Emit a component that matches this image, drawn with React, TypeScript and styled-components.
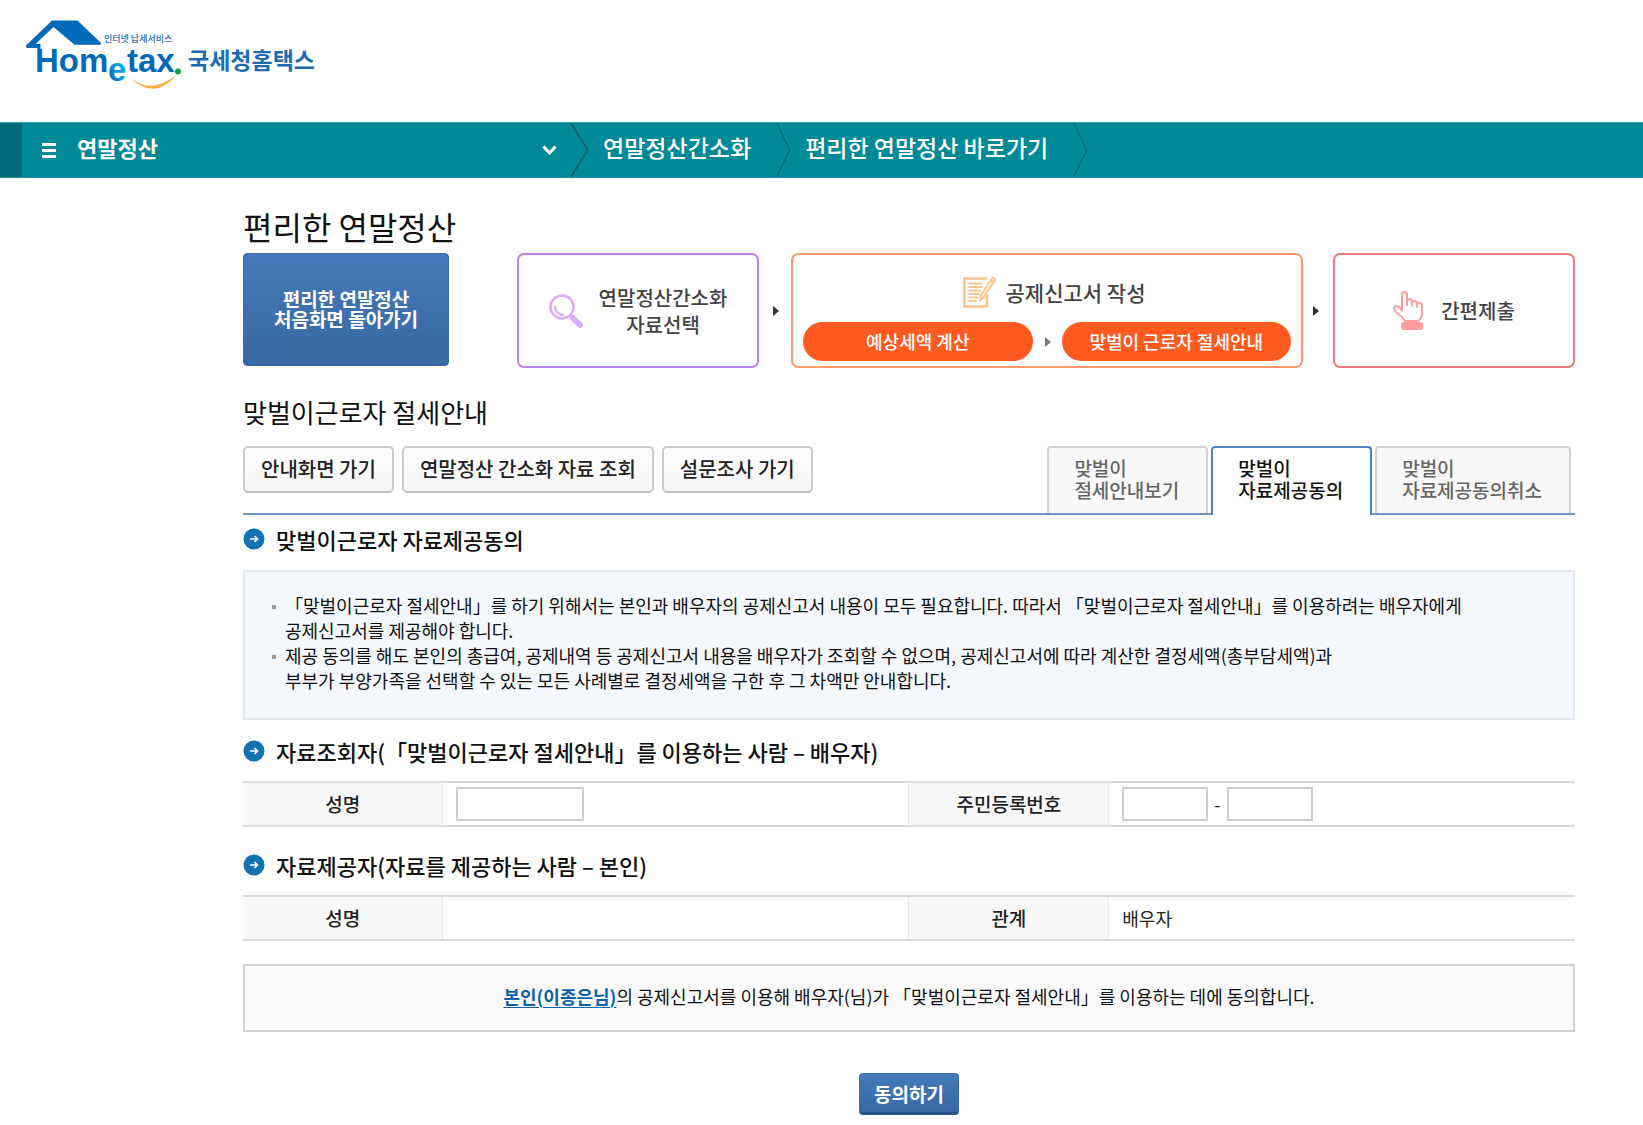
import React from "react";
import styled, { createGlobalStyle, css } from "styled-components";

const GlobalStyle = createGlobalStyle`
  *, *::before, *::after { box-sizing: border-box; }
  body {
    margin: 0;
    background: #fff;
    color: #222;
    font-family: "Noto Sans CJK KR", "Liberation Sans", sans-serif;
    font-size: 18px;
    line-height: 25px;
    text-spacing-trim: space-all;
  }
  button, input { font: inherit; color: inherit; }
  h1, h2, h3, p, ul, ol { margin: 0; padding: 0; }
  ul, ol { list-style: none; }
`;

const Header = styled.header`
  height: 122px;
  padding: 16px 24px;
`;

const LogoLink = styled.a`
  display: inline-block;
  svg { display: block; }
`;

const NavBar = styled.nav`
  display: flex;
  height: 56px;
  background: #008996;
  border-top: 1px solid #3aa3ad;
  border-bottom: 1px solid #1b929e;
  color: #fff;
`;

const NavEdge = styled.div`
  width: 22px;
  background: #006b78;
`;

const MenuButton = styled.button`
  display: flex;
  align-items: center;
  width: 548px;
  padding: 0 13px 0 20px;
  border: 0;
  background: none;
  font-size: 22px;
  font-weight: 700;
  cursor: pointer;
  span { flex: 1; padding: 0 0 5px 21px; text-align: left; }
`;

const NavLink = styled.a`
  display: flex;
  align-items: center;
  padding: 0 25px 5px 13px;
  color: #fff;
  font-size: 23px;
  font-weight: 500;
  text-decoration: none;
`;

const Main = styled.main`
  padding: 28px 68px 10px 243px;
`;

const PageTitle = styled.h1`
  font-size: 32px;
  line-height: 40px;
  font-weight: 400;
  color: #111;
  margin-bottom: 7px;
`;

const Steps = styled.div`
  display: grid;
  grid-template-columns: 274px minmax(0, 242fr) auto minmax(0, 512fr) auto minmax(0, 242fr);
  height: 115px;
`;

const blueFace = css`
  border: 1px solid #3c6ca8;
  background: linear-gradient(#4679bb, #3768a3);
  color: #fff;
  font-weight: 700;
  cursor: pointer;
`;

const HomeButton = styled.button`
  ${blueFace}
  width: 206px;
  height: 113px;
  padding: 0 0 2px;
  border-radius: 4px;
  font-size: 19px;
  line-height: 20px;
`;

const StepCard = styled.section<{ $color: string }>`
  display: flex;
  align-items: center;
  justify-content: center;
  gap: 16px;
  border: 2px solid ${(p) => p.$color};
  border-radius: 7px;
  font-size: 20px;
  line-height: 27px;
  font-weight: 500;
  color: #444;
  text-align: center;
`;

const WriteCard = styled(StepCard)`
  flex-direction: column;
  justify-content: flex-end;
  gap: 14px;
  padding: 0 10px 5px;
`;

const WriteTitle = styled.div`
  display: flex;
  align-items: center;
  gap: 9px;
  padding-left: 14px;
  font-size: 21px;
`;

const PillRow = styled.div`
  display: flex;
  align-self: stretch;
  align-items: center;
`;

const Pill = styled.button`
  flex: 1 1 0;
  height: 39px;
  padding: 0;
  border: 0;
  border-radius: 20px;
  background: #ff5b20;
  color: #fff;
  font-size: 18px;
  font-weight: 500;
  cursor: pointer;
`;

const Arrow = styled.span<{ $color?: string; $gap?: string }>`
  align-self: center;
  flex: none;
  margin: ${(p) => p.$gap || "0 12px 0 14px"};
  border: 5px solid transparent;
  border-left: 6px solid ${(p) => p.$color || "#333"};
  border-right: 0;
`;

const SubTitle = styled.h2`
  margin: 26px 0 16px;
  font-size: 26px;
  line-height: 36px;
  font-weight: 400;
  color: #111;
`;

const TabBar = styled.div`
  display: flex;
  justify-content: space-between;
  align-items: flex-start;
  margin-bottom: 9px;
  border-bottom: 2px solid #6d95c9;
`;

const ButtonGroup = styled.div`
  display: flex;
  gap: 8px;
`;

const LightButton = styled.button`
  height: 47px;
  padding: 0 16px 2px;
  border: 2px solid #cccccc;
  border-bottom-color: #c0c0c0;
  border-radius: 5px;
  background: linear-gradient(#fff, #f4f4f4);
  font-size: 20px;
  font-weight: 500;
  cursor: pointer;
`;

const Tabs = styled.div`
  display: flex;
  gap: 3px;
  padding-right: 4px;
`;

const Tab = styled.button<{ $active?: boolean }>`
  height: ${(p) => (p.$active ? 69 : 67)}px;
  margin-bottom: ${(p) => (p.$active ? -2 : 0)}px;
  padding: 0 27px ${(p) => (p.$active ? 6 : 4)}px 25px;
  border: 2px solid ${(p) => (p.$active ? "#4f81c0" : "#d2d2d2")};
  border-bottom: 0;
  border-radius: 4px 4px 0 0;
  background: ${(p) => (p.$active ? "#fff" : "#f8f8f8")};
  color: ${(p) => (p.$active ? "#111" : "#666")};
  font-size: 19px;
  line-height: 22px;
  font-weight: 500;
  text-align: left;
  cursor: pointer;
`;

const SectionTitle = styled.h3`
  display: flex;
  align-items: center;
  gap: 11px;
  font-size: 22px;
  line-height: 30px;
  font-weight: 500;
  color: #111;
`;

const Notice = styled.ul`
  margin: 16px 0;
  padding: 21px 26px 25px;
  border: 2px solid #e2e9f0;
  background: #f4f7fc;
  color: #111;
`;

const NoticeItem = styled.li`
  display: flex;
  &::before {
    content: "";
    flex: none;
    width: 4px;
    height: 4px;
    margin: 12px 9px 0 1px;
    background: #999;
  }
`;

const InfoTable = styled.table`
  width: 100%;
  height: 46px;
  margin: 15px 0 23px;
  table-layout: fixed;
  border-collapse: collapse;
  border-top: 2px solid #dadada;
  border-bottom: 2px solid #dadada;
  th, td { height: 44px; padding: 0; }
  th {
    width: 15%;
    padding-bottom: 2px;
    background: #f8f8f8;
    border-right: 1px solid #e8e8e8;
    font-size: 19px;
    font-weight: 500;
  }
  td { width: 35%; padding: 0 13px; text-align: left; }
  td + th { border-left: 1px solid #e8e8e8; }
`;

const Fields = styled.div`
  display: flex;
  align-items: center;
  gap: 6px;
`;

const Field = styled.input<{ $w: number }>`
  width: ${(p) => p.$w}px;
  height: 34px;
  padding: 0 6px;
  border: 2px solid #cccccc;
  border-radius: 0;
  background: #fff;
`;

const Consent = styled.p`
  padding: 18px 20px 21px;
  border: 2px solid #d2d2d2;
  background: #f9f9f9;
  color: #111;
  text-align: center;
  a { color: #0a62a8; font-weight: 700; text-underline-offset: 3px; }
`;

const SubmitRow = styled.div`
  display: flex;
  justify-content: center;
  margin-top: 41px;
`;

const SubmitButton = styled.button`
  ${blueFace}
  height: 42px;
  padding: 0 14px;
  border-bottom: 3px solid #2b5388;
  border-radius: 4px;
  font-size: 19px;
`;

const HometaxLogo = () => (
  <svg width="296" height="76" viewBox="24 16 296 76" role="img" aria-label="Hometax 국세청홈택스">
    <defs>
      <linearGradient id="eFill" x1="0" y1="1" x2="1" y2="0">
        <stop offset="0.2" stopColor="#0a6fc0" />
        <stop offset="0.9" stopColor="#00c8f5" />
      </linearGradient>
    </defs>
    <path
      d="M52 20.500h25.500L101 43q.5 1.700-1.500 1.700H74.500L53.500 27 35.500 44h5v6H37.500v-2H27.500q-2.500-1-1-3z"
      fill="#006ab8"
    />
    <g fontFamily='"Liberation Sans", Arial, sans-serif' fontWeight="700" fontSize="33" fill="#006ab8">
      <text x="35" y="72">Hom</text>
      <text x="127" y="72">tax</text>
      <text x="108" y="81" fill="url(#eFill)">e</text>
    </g>
    <path d="M128 76q22 20 48-1-21 27-48 1z" fill="#fbb03b" />
    <circle cx="178" cy="71.500" r="3" fill="#00a651" />
    <g fontFamily='"Noto Sans CJK KR", sans-serif' fill="#1c6bb5" fontWeight="700">
      <text x="104" y="42" fontSize="9" fontWeight="500">인터넷 납세서비스</text>
      <text x="188" y="69" fontSize="23">국세청홈택스</text>
    </g>
  </svg>
);

const MenuIcon = () => (
  <svg width="14" height="15" viewBox="0 0 14 15" aria-hidden="true">
    <path d="M0 1.500h14M0 7.500h14M0 13.500h14" stroke="#fff" strokeWidth="3" />
  </svg>
);

const ChevronIcon = () => (
  <svg width="15" height="11" viewBox="0 0 15 11" aria-hidden="true">
    <path d="M1.500 1.500l6 6.500 6-6.500" fill="none" stroke="#fff" strokeWidth="3" />
  </svg>
);

const NavDivider = ({ width = 14, color = "#00727f" }: { width?: number; color?: string }) => (
  <svg width={width + 2} height="54" viewBox={`0 0 ${width + 2} 54`} aria-hidden="true">
    <path d={`M2 0L${width + 1} 27L2 54`} fill="none" stroke="#2b9ca6" strokeWidth="1" />
    <path d={`M1 0L${width} 27L1 54`} fill="none" stroke={color} strokeWidth="2" />
  </svg>
);

const SearchIcon = () => (
  <svg width="34" height="34" viewBox="0 0 34 34" fill="none" stroke="#dbacff" aria-hidden="true">
    <circle cx="13" cy="13" r="11.500" strokeWidth="2.600" />
    <path d="M6 13q1 7 8 8" strokeWidth="2" strokeLinecap="round" />
    <path d="M24 24l7 7" strokeWidth="6" strokeLinecap="round" />
    <path d="M20.500 20.500l3 3" strokeWidth="3" />
  </svg>
);

const NoteIcon = () => (
  <svg width="34" height="32" viewBox="0 0 34 32" fill="none" stroke="#ffc28c" aria-hidden="true">
    <path d="M24 2.500H1.500v28h22.500V18" strokeWidth="2.600" />
    <path d="M5.500 7.500h14M5.500 11h14M5.500 14.500h13M5.500 18h11M5.500 21.500h10M5.500 25h8" strokeWidth="1.800" />
    <path d="M29.500 1.500l3 2-12 18-3.500 3 .5-5z" fill="#fff0df" strokeWidth="1.800" />
    <path d="M28 4.500l3 2" strokeWidth="2.500" />
  </svg>
);

const HandIcon = () => (
  <svg width="32" height="39" viewBox="0 0 32 39" aria-hidden="true">
    <path
      d="M9 20V4q0-3 2.500-3T14 4v10-4q0-2 2.500-2t2.500 2.500V15v-3q0-2 2.500-2t2.500 2.500V16v-2q0-2 2.500-2t2.500 3v8q0 4-4 7H12q-3-5-8-8-4-3-2.500-6 2-2 5 0z"
      fill="none"
      stroke="#ff9c9f"
      strokeWidth="2"
      strokeLinejoin="round"
    />
    <rect x="8" y="31" width="22" height="8" rx="3" fill="#ff9c9f" />
  </svg>
);

const BulletIcon = () => (
  <svg width="22" height="22" viewBox="0 0 22 22" aria-hidden="true">
    <circle cx="11" cy="11" r="10.500" fill="#1272b4" />
    <path d="M7 11h7.500M11.500 8l3 3-3 3" fill="none" stroke="#fff" strokeWidth="1.600" />
  </svg>
);

const Section = ({ children }: { children: React.ReactNode }) => (
  <SectionTitle>
    <BulletIcon />
    <span>{children}</span>
  </SectionTitle>
);

const tabs = [
  { second: "절세안내보기" },
  { second: "자료제공동의", active: true },
  { second: "자료제공동의취소" },
];

export default function App() {
  return (
    <>
      <GlobalStyle />
      <Header>
        <LogoLink href="#home">
          <HometaxLogo />
        </LogoLink>
      </Header>
      <NavBar>
        <NavEdge />
        <MenuButton type="button">
          <MenuIcon />
          <span>연말정산</span>
          <ChevronIcon />
        </MenuButton>
        <NavDivider width={18} color="#0b5f68" />
        <NavLink href="#simple">연말정산간소화</NavLink>
        <NavDivider />
        <NavLink href="#easy">편리한 연말정산 바로가기</NavLink>
        <NavDivider />
      </NavBar>

      <Main>
        <PageTitle>편리한 연말정산</PageTitle>
        <Steps>
          <HomeButton type="button">
            편리한 연말정산
            <br />
            처음화면 돌아가기
          </HomeButton>
          <StepCard $color="#bd80ec">
            <SearchIcon />
            <span>
              연말정산간소화
              <br />
              자료선택
            </span>
          </StepCard>
          <Arrow />
          <WriteCard $color="#ff976b">
            <WriteTitle>
              <NoteIcon />
              <span>공제신고서 작성</span>
            </WriteTitle>
            <PillRow>
              <Pill type="button">예상세액 계산</Pill>
              <Arrow $color="#777" $gap="0 11px 0 12px" />
              <Pill type="button">맞벌이 근로자 절세안내</Pill>
            </PillRow>
          </WriteCard>
          <Arrow $gap="0 14px 0 10px" />
          <StepCard $color="#f0777c">
            <HandIcon />
            <span>간편제출</span>
          </StepCard>
        </Steps>

        <SubTitle>맞벌이근로자 절세안내</SubTitle>
        <TabBar>
          <ButtonGroup>
            <LightButton type="button">안내화면 가기</LightButton>
            <LightButton type="button">연말정산 간소화 자료 조회</LightButton>
            <LightButton type="button">설문조사 가기</LightButton>
          </ButtonGroup>
          <Tabs role="tablist">
            {tabs.map((t) => (
              <Tab key={t.second} type="button" role="tab" aria-selected={!!t.active} $active={t.active}>
                맞벌이
                <br />
                {t.second}
              </Tab>
            ))}
          </Tabs>
        </TabBar>

        <Section>맞벌이근로자 자료제공동의</Section>
        <Notice>
          <NoticeItem>
            <span>
              「맞벌이근로자 절세안내」를 하기 위해서는 본인과 배우자의 공제신고서 내용이 모두 필요합니다. 따라서
              「맞벌이근로자 절세안내」를 이용하려는 배우자에게
              <br />
              공제신고서를 제공해야 합니다.
            </span>
          </NoticeItem>
          <NoticeItem>
            <span>
              제공 동의를 해도 본인의 총급여, 공제내역 등 공제신고서 내용을 배우자가 조회할 수 없으며, 공제신고서에 따라
              계산한 결정세액(총부담세액)과
              <br />
              부부가 부양가족을 선택할 수 있는 모든 사례별로 결정세액을 구한 후 그 차액만 안내합니다.
            </span>
          </NoticeItem>
        </Notice>

        <Section>자료조회자(「맞벌이근로자 절세안내」를 이용하는 사람 – 배우자)</Section>
        <InfoTable>
          <tbody>
            <tr>
              <th scope="row">
                <label htmlFor="name">성명</label>
              </th>
              <td>
                <Fields>
                  <Field id="name" type="text" $w={128} />
                </Fields>
              </td>
              <th scope="row">
                <label htmlFor="rrn1">주민등록번호</label>
              </th>
              <td>
                <Fields>
                  <Field id="rrn1" type="text" $w={86} />-
                  <Field aria-label="주민등록번호 뒷자리" type="password" $w={86} />
                </Fields>
              </td>
            </tr>
          </tbody>
        </InfoTable>

        <Section>자료제공자(자료를 제공하는 사람 – 본인)</Section>
        <InfoTable>
          <tbody>
            <tr>
              <th scope="row">성명</th>
              <td />
              <th scope="row">관계</th>
              <td>배우자</td>
            </tr>
          </tbody>
        </InfoTable>

        <Consent>
          <a href="#self">본인(이종은님)</a>의 공제신고서를 이용해 배우자(님)가 「맞벌이근로자 절세안내」를 이용하는 데에
          동의합니다.
        </Consent>
        <SubmitRow>
          <SubmitButton type="submit">동의하기</SubmitButton>
        </SubmitRow>
      </Main>
    </>
  );
}
